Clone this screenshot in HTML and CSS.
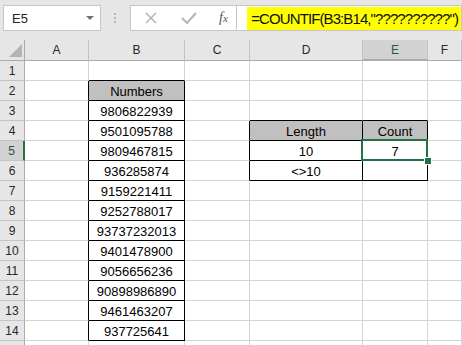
FILE: index.html
```html
<!DOCTYPE html>
<html lang="en">
<head>
    <meta charset="UTF-8">
    <meta name="viewport" content="width=device-width, initial-scale=1.0">
    <link rel="stylesheet" href="styles.css">
    <title>COUNTIF length</title>
</head>
<body>
    <div class="topbar">
        <div class="namebox"><span>E5</span><span class="drop"></span></div>
        <div class="grip"><i></i><i></i><i></i></div>
        <div class="fxbox">
            <svg class="icon" width="12" height="12" viewBox="0 0 12 12"><path d="M1 1 L11 11 M11 1 L1 11" stroke="#b4b4b4" stroke-width="1.5" fill="none"/></svg>
            <svg class="icon" width="16" height="12" viewBox="0 0 16 12"><path d="M1 6 L6 11 L15 1" stroke="#b4b4b4" stroke-width="2" fill="none"/></svg>
            <span class="fx">f<small>x</small></span>
        </div>
        <div class="formula"><span class="marker">=COUNTIF(B3:B14,"??????????")</span></div>
    </div>

    <div class="sheet">
        <div class="row head">
            <div class="rh corner"><svg width="24" height="20" viewBox="0 0 24 20"><polygon points="9,17 22,17 22,4" fill="#b4b4b4"/></svg></div>
            <div class="a">A</div><div class="b">B</div><div class="c">C</div><div class="d">D</div><div class="e sel">E</div><div class="f">F</div>
        </div>
        <div class="row"><div class="rh">1</div><div class="a"></div><div class="b kb"></div><div class="c"></div><div class="d"></div><div class="e"></div><div class="f"></div></div>
        <div class="row"><div class="rh">2</div><div class="a kr"></div><div class="b kr kb fill">Numbers</div><div class="c"></div><div class="d"></div><div class="e"></div><div class="f"></div></div>
        <div class="row"><div class="rh">3</div><div class="a kr"></div><div class="b kr kb">9806822939</div><div class="c"></div><div class="d kb"></div><div class="e kb"></div><div class="f"></div></div>
        <div class="row"><div class="rh">4</div><div class="a kr"></div><div class="b kr kb">9501095788</div><div class="c kr"></div><div class="d kr kb fill">Length</div><div class="e kr kb fill">Count</div><div class="f"></div></div>
        <div class="row"><div class="rh sel">5</div><div class="a kr"></div><div class="b kr kb">9809467815</div><div class="c kr"></div><div class="d kr kb">10</div><div class="e kr kb active">7</div><div class="f"></div></div>
        <div class="row"><div class="rh">6</div><div class="a kr"></div><div class="b kr kb">936285874</div><div class="c kr"></div><div class="d kr kb">&lt;&gt;10</div><div class="e kr kb"></div><div class="f"></div></div>
        <div class="row"><div class="rh">7</div><div class="a kr"></div><div class="b kr kb">9159221411</div><div class="c"></div><div class="d"></div><div class="e"></div><div class="f"></div></div>
        <div class="row"><div class="rh">8</div><div class="a kr"></div><div class="b kr kb">9252788017</div><div class="c"></div><div class="d"></div><div class="e"></div><div class="f"></div></div>
        <div class="row"><div class="rh">9</div><div class="a kr"></div><div class="b kr kb">93737232013</div><div class="c"></div><div class="d"></div><div class="e"></div><div class="f"></div></div>
        <div class="row"><div class="rh">10</div><div class="a kr"></div><div class="b kr kb">9401478900</div><div class="c"></div><div class="d"></div><div class="e"></div><div class="f"></div></div>
        <div class="row"><div class="rh">11</div><div class="a kr"></div><div class="b kr kb">9056656236</div><div class="c"></div><div class="d"></div><div class="e"></div><div class="f"></div></div>
        <div class="row"><div class="rh">12</div><div class="a kr"></div><div class="b kr kb">90898986890</div><div class="c"></div><div class="d"></div><div class="e"></div><div class="f"></div></div>
        <div class="row"><div class="rh">13</div><div class="a kr"></div><div class="b kr kb">9461463207</div><div class="c"></div><div class="d"></div><div class="e"></div><div class="f"></div></div>
        <div class="row"><div class="rh">14</div><div class="a kr"></div><div class="b kr kb">937725641</div><div class="c"></div><div class="d"></div><div class="e"></div><div class="f"></div></div>
        <div class="row"><div class="rh"></div><div class="a"></div><div class="b"></div><div class="c"></div><div class="d"></div><div class="e"></div><div class="f"></div></div>
    </div>
</body>
</html>
```
FILE: styles.css
```css
body {
    margin: 0;
    padding: 0;
    width: 462px;
    height: 345px;
    overflow: hidden;
    background-color: #ffffff;
    font-family: "Liberation Sans", Arial, sans-serif;
    color: #000000;
}

/* formula bar */
.topbar {
    display: flex;
    align-items: flex-start;
    height: 40px;
    background-color: #e6e6e6;
}
.namebox {
    box-sizing: border-box;
    display: flex;
    align-items: center;
    justify-content: space-between;
    margin: 5px 0 0 3px;
    padding: 0 6px 0 8px;
    width: 102px;
    height: 26px;
    background-color: #ffffff;
    border: 1px solid #c6c6c6;
    font-size: 13px;
    color: #222222;
}
.drop {
    width: 0;
    height: 0;
    border-left: 4px solid transparent;
    border-right: 4px solid transparent;
    border-top: 4px solid #707070;
}
.grip {
    display: flex;
    flex-direction: column;
    align-items: center;
    gap: 2px;
    width: 31px;
    margin-top: 13px;
}
.grip i {
    display: block;
    width: 2px;
    height: 2px;
    background-color: #b8b8b8;
}
.fxbox {
    box-sizing: border-box;
    display: flex;
    align-items: center;
    margin-top: 5px;
    width: 112px;
    height: 26px;
    background-color: #ffffff;
    border: 1px solid #c6c6c6;
    padding-left: 14px;
}
.icon {
    display: block;
    margin-right: 24px;
}
.fx {
    font-family: "Liberation Serif", serif;
    font-style: italic;
    font-size: 14px;
    color: #555555;
    margin-left: -2px;
}
.fx small {
    font-size: 11px;
}
.formula {
    box-sizing: border-box;
    flex: 1;
    display: flex;
    align-items: center;
    margin-top: 5px;
    height: 26px;
    background-color: #ffffff;
    border: 1px solid #c6c6c6;
    border-left: none;
    padding-left: 10px;
    white-space: nowrap;
}
.marker {
    background-color: #ffff00;
    padding: 3px 3px 3px 4px;
    font-size: 15px;
    letter-spacing: -0.9px;
    color: #111111;
}

/* grid */
.row {
    display: flex;
    height: 20px;
}
.row > div {
    box-sizing: border-box;
    flex: none;
    display: flex;
    align-items: flex-end;
    justify-content: center;
    border-right: 1px solid #d4d4d4;
    border-bottom: 1px solid #d4d4d4;
    font-size: 13px;
    line-height: 16px;
}
.rh { width: 25px; }
.a { width: 64px; }
.b { width: 96px; }
.c { width: 65px; }
.d { width: 113px; }
.e { width: 65px; }
.row > .f { flex: 1; }

.row > .rh {
    background-color: #e6e6e6;
    border-right-color: #ababab;
    border-bottom-color: #c4c4c4;
    font-size: 12px;
    color: #262626;
    align-items: center;
}
.head {
    height: 21px;
}
.head > div {
    background-color: #e6e6e6;
    border-right-color: #c4c4c4 !important;
    border-bottom-color: #ababab !important;
    font-size: 12px;
    color: #262626;
    align-items: center !important;
}
.head > .corner {
    border-right-color: #ababab !important;
}
.corner svg {
    display: block;
}

.row > .sel {
    background-color: #d2d2d2;
    color: #1f5a39;
}
.head > .sel {
    border-bottom: 2px solid #217346;
}
.row > .rh.sel {
    border-right: 2px solid #217346;
}

/* table borders */
.row > .kr { border-right-color: #000000; }
.row > .kb { border-bottom-color: #000000; }
.fill { background-color: #c0c0c0; }

.active {
    position: relative;
}
.active::after {
    content: "";
    position: absolute;
    left: -2px;
    top: -2px;
    right: -1px;
    bottom: -1px;
    border: 2px solid #217346;
}
.active::before {
    content: "";
    position: absolute;
    right: -5px;
    bottom: -5px;
    width: 6px;
    height: 6px;
    background-color: #217346;
    border: 1px solid #ffffff;
    z-index: 2;
}
```
